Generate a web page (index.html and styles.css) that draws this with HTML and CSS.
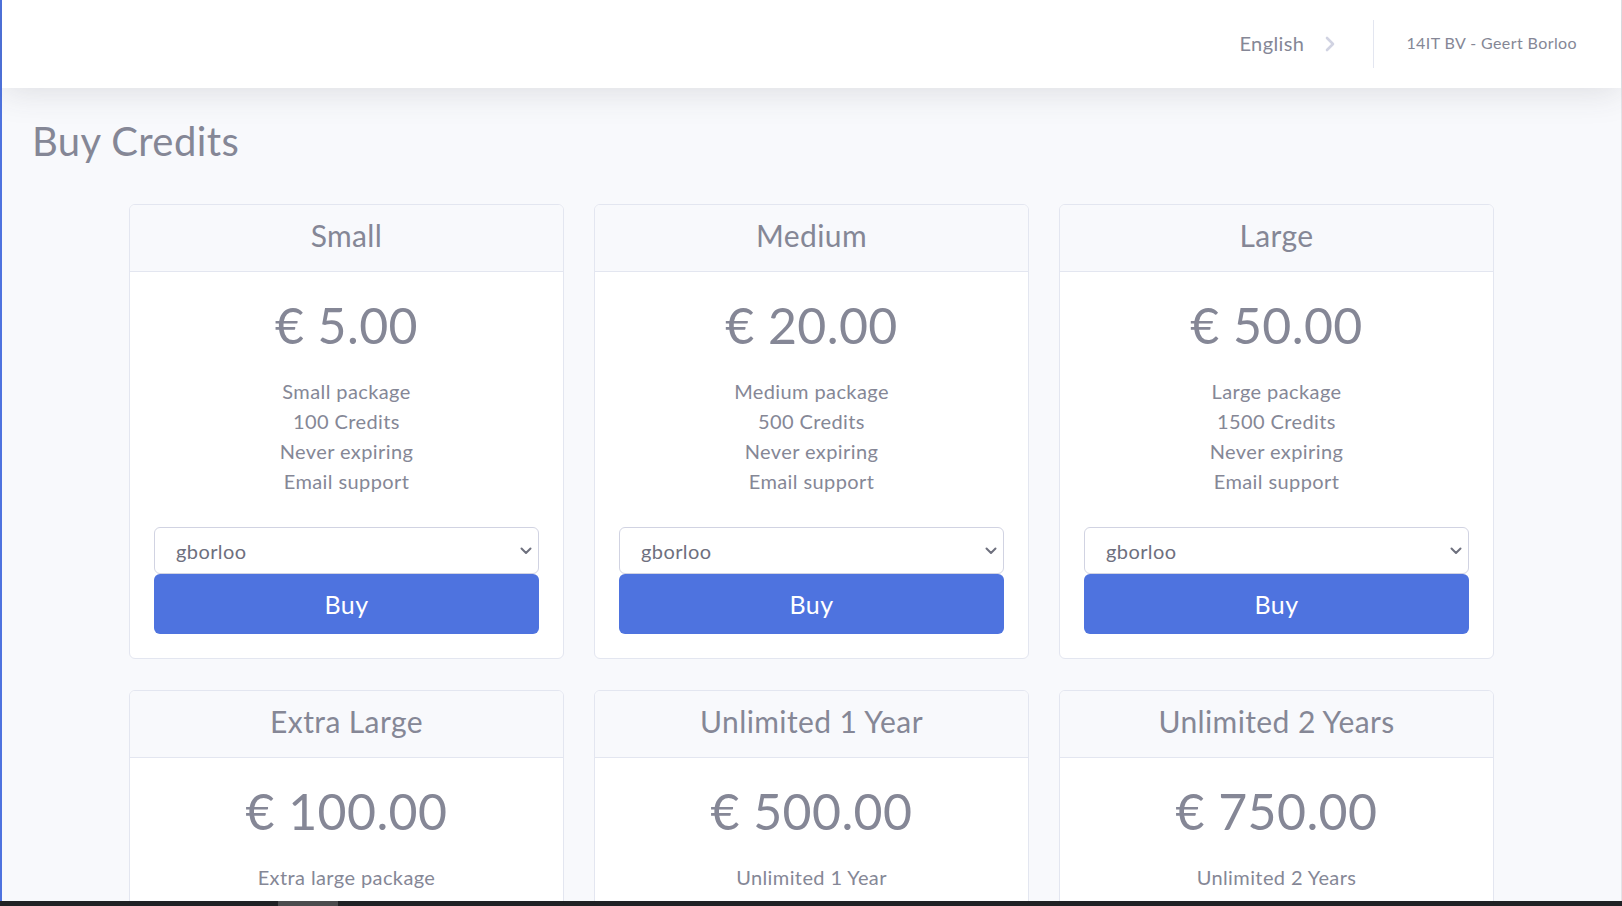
FILE: index.html
```html
<!DOCTYPE html>
<html lang="en">
<head>
<meta charset="utf-8">
<title>Buy Credits</title>
<link rel="stylesheet" href="styles.css">
</head>
<body>
<div class="app">
  <div class="content">
    <nav class="topbar">
      <div class="lang">
        <span>English</span>
        <svg class="chev" width="12" height="16" viewBox="0 0 12 16"><path d="M3 2 L9 8 L3 14" fill="none" stroke="#d1d3e2" stroke-width="2.6" stroke-linecap="round" stroke-linejoin="round"/></svg>
      </div>
      <div class="divider"></div>
      <div class="user">14IT BV - Geert Borloo</div>
    </nav>
    <main class="page">
      <h1 class="title">Buy Credits</h1>
      <div class="grid">
        <div class="card">
          <div class="card-header"><h4>Small</h4></div>
          <div class="card-body">
            <h2 class="price">€ 5.00</h2>
            <ul class="features"><li>Small package</li><li>100 Credits</li><li>Never expiring</li><li>Email support</li></ul>
            <div class="select-wrap"><select class="select"><option>gborloo</option></select><svg class="caret" width="12" height="8" viewBox="0 0 12 8"><path d="M1.5 1.5 L6 6 L10.5 1.5" fill="none" stroke="#6e707e" stroke-width="2" stroke-linecap="round" stroke-linejoin="round"/></svg></div>
            <button class="btn">Buy</button>
          </div>
        </div>
        <div class="card">
          <div class="card-header"><h4>Medium</h4></div>
          <div class="card-body">
            <h2 class="price">€ 20.00</h2>
            <ul class="features"><li>Medium package</li><li>500 Credits</li><li>Never expiring</li><li>Email support</li></ul>
            <div class="select-wrap"><select class="select"><option>gborloo</option></select><svg class="caret" width="12" height="8" viewBox="0 0 12 8"><path d="M1.5 1.5 L6 6 L10.5 1.5" fill="none" stroke="#6e707e" stroke-width="2" stroke-linecap="round" stroke-linejoin="round"/></svg></div>
            <button class="btn">Buy</button>
          </div>
        </div>
        <div class="card">
          <div class="card-header"><h4>Large</h4></div>
          <div class="card-body">
            <h2 class="price">€ 50.00</h2>
            <ul class="features"><li>Large package</li><li>1500 Credits</li><li>Never expiring</li><li>Email support</li></ul>
            <div class="select-wrap"><select class="select"><option>gborloo</option></select><svg class="caret" width="12" height="8" viewBox="0 0 12 8"><path d="M1.5 1.5 L6 6 L10.5 1.5" fill="none" stroke="#6e707e" stroke-width="2" stroke-linecap="round" stroke-linejoin="round"/></svg></div>
            <button class="btn">Buy</button>
          </div>
        </div>
        <div class="card">
          <div class="card-header"><h4>Extra Large</h4></div>
          <div class="card-body">
            <h2 class="price">€ 100.00</h2>
            <ul class="features"><li>Extra large package</li><li>5000 Credits</li><li>Never expiring</li><li>Email support</li></ul>
            <div class="select-wrap"><select class="select"><option>gborloo</option></select><svg class="caret" width="12" height="8" viewBox="0 0 12 8"><path d="M1.5 1.5 L6 6 L10.5 1.5" fill="none" stroke="#6e707e" stroke-width="2" stroke-linecap="round" stroke-linejoin="round"/></svg></div>
            <button class="btn">Buy</button>
          </div>
        </div>
        <div class="card">
          <div class="card-header"><h4>Unlimited 1 Year</h4></div>
          <div class="card-body">
            <h2 class="price">€ 500.00</h2>
            <ul class="features"><li>Unlimited 1 Year</li><li>Unlimited Credits</li><li>Expires after 1 year</li><li>Email support</li></ul>
            <div class="select-wrap"><select class="select"><option>gborloo</option></select><svg class="caret" width="12" height="8" viewBox="0 0 12 8"><path d="M1.5 1.5 L6 6 L10.5 1.5" fill="none" stroke="#6e707e" stroke-width="2" stroke-linecap="round" stroke-linejoin="round"/></svg></div>
            <button class="btn">Buy</button>
          </div>
        </div>
        <div class="card">
          <div class="card-header"><h4>Unlimited 2 Years</h4></div>
          <div class="card-body">
            <h2 class="price">€ 750.00</h2>
            <ul class="features"><li>Unlimited 2 Years</li><li>Unlimited Credits</li><li>Expires after 2 years</li><li>Email support</li></ul>
            <div class="select-wrap"><select class="select"><option>gborloo</option></select><svg class="caret" width="12" height="8" viewBox="0 0 12 8"><path d="M1.5 1.5 L6 6 L10.5 1.5" fill="none" stroke="#6e707e" stroke-width="2" stroke-linecap="round" stroke-linejoin="round"/></svg></div>
            <button class="btn">Buy</button>
          </div>
        </div>
      </div>
    </main>
  </div>
</div>
<div class="hscroll"><div class="thumb"></div></div>
</body>
</html>
```

FILE: styles.css
```css
html, body {
  margin: 0;
  padding: 0;
  height: 100%;
  overflow: hidden;
}
body {
  background: #f8f9fc;
  font-family: "Lato", "Noto Sans", sans-serif;
  color: #858796;
  font-size: 20px;
  line-height: 1.5;
  letter-spacing: 0.02em;
}
.app {
  display: flex;
  min-height: 100%;
  border-left: 2px solid #4e73df;
  border-right: 1px solid #e4e4e8;
  box-sizing: border-box;
}
.content {
  flex: 1;
  display: flex;
  flex-direction: column;
}
.topbar {
  height: 88px;
  background: #fff;
  box-shadow: 0 3px 35px 0 rgba(58, 59, 69, 0.15);
  display: flex;
  align-items: center;
  justify-content: flex-end;
  padding-right: 44px;
  position: relative;
  z-index: 1;
}
.lang {
  display: flex;
  align-items: center;
  gap: 20px;
  font-size: 20px;
  color: #858796;
  margin-top: -2px;
}
.chev {
  display: block;
  margin-top: 1px;
}
.divider {
  width: 1px;
  height: 48px;
  background: #e3e6f0;
  margin: 0 32px 0 37px;
}
.user {
  font-size: 16px;
  color: #858796;
  margin-top: -2px;
}
.page {
  padding: 30px 30px 0 30px;
}
.title {
  margin: 0 0 38px 0;
  font-size: 40px;
  line-height: 46px;
  padding-bottom: 2px;
  font-weight: 400;
  color: #858796;
}
.grid {
  display: grid;
  grid-template-columns: repeat(3, 435px);
  justify-content: center;
  column-gap: 30px;
  row-gap: 31px;
  margin-left: -30px;
  margin-right: -30px;
}
.card {
  background: #fff;
  border: 1px solid #e3e6f0;
  border-radius: 6px;
  overflow: hidden;
}
.card-header {
  background: #f8f9fc;
  border-bottom: 1px solid #e3e6f0;
  padding: 12px 20px 18px;
  text-align: center;
}
.card-header h4 {
  margin: 0;
  font-size: 30px;
  line-height: 36px;
  font-weight: 400;
  color: #858796;
}
.card-body {
  padding: 24px;
  text-align: center;
}
.price {
  margin: 0 0 20px 0;
  font-size: 50px;
  line-height: 58px;
  padding-bottom: 2px;
  font-weight: 400;
  color: #858796;
}
.features {
  list-style: none;
  margin: 0 0 31px 0;
  padding: 0;
  font-size: 20px;
  line-height: 30px;
}
.select-wrap {
  position: relative;
}
.select {
  display: block;
  width: 100%;
  height: 47px;
  -webkit-appearance: none;
  appearance: none;
  background: #fff;
  border: 1px solid #d1d3e2;
  border-radius: 6px;
  padding: 0 40px 0 21px;
  font-family: inherit;
  font-size: 20px;
  letter-spacing: 0.02em;
  color: #6e707e;
  box-sizing: border-box;
}
.caret {
  position: absolute;
  right: 7px;
  top: 20px;
  pointer-events: none;
}
.btn {
  display: block;
  width: 100%;
  height: 60px;
  background: #4e73df;
  color: #fff;
  border: none;
  border-radius: 6px;
  font-family: inherit;
  font-size: 25px;
  letter-spacing: 0.02em;
  cursor: pointer;
}
.hscroll {
  position: fixed;
  left: 0;
  right: 0;
  bottom: 0;
  height: 5px;
  background: #202124;
}
.thumb {
  position: absolute;
  left: 278px;
  top: 0;
  width: 60px;
  height: 5px;
  background: #4b4b4d;
}
```
